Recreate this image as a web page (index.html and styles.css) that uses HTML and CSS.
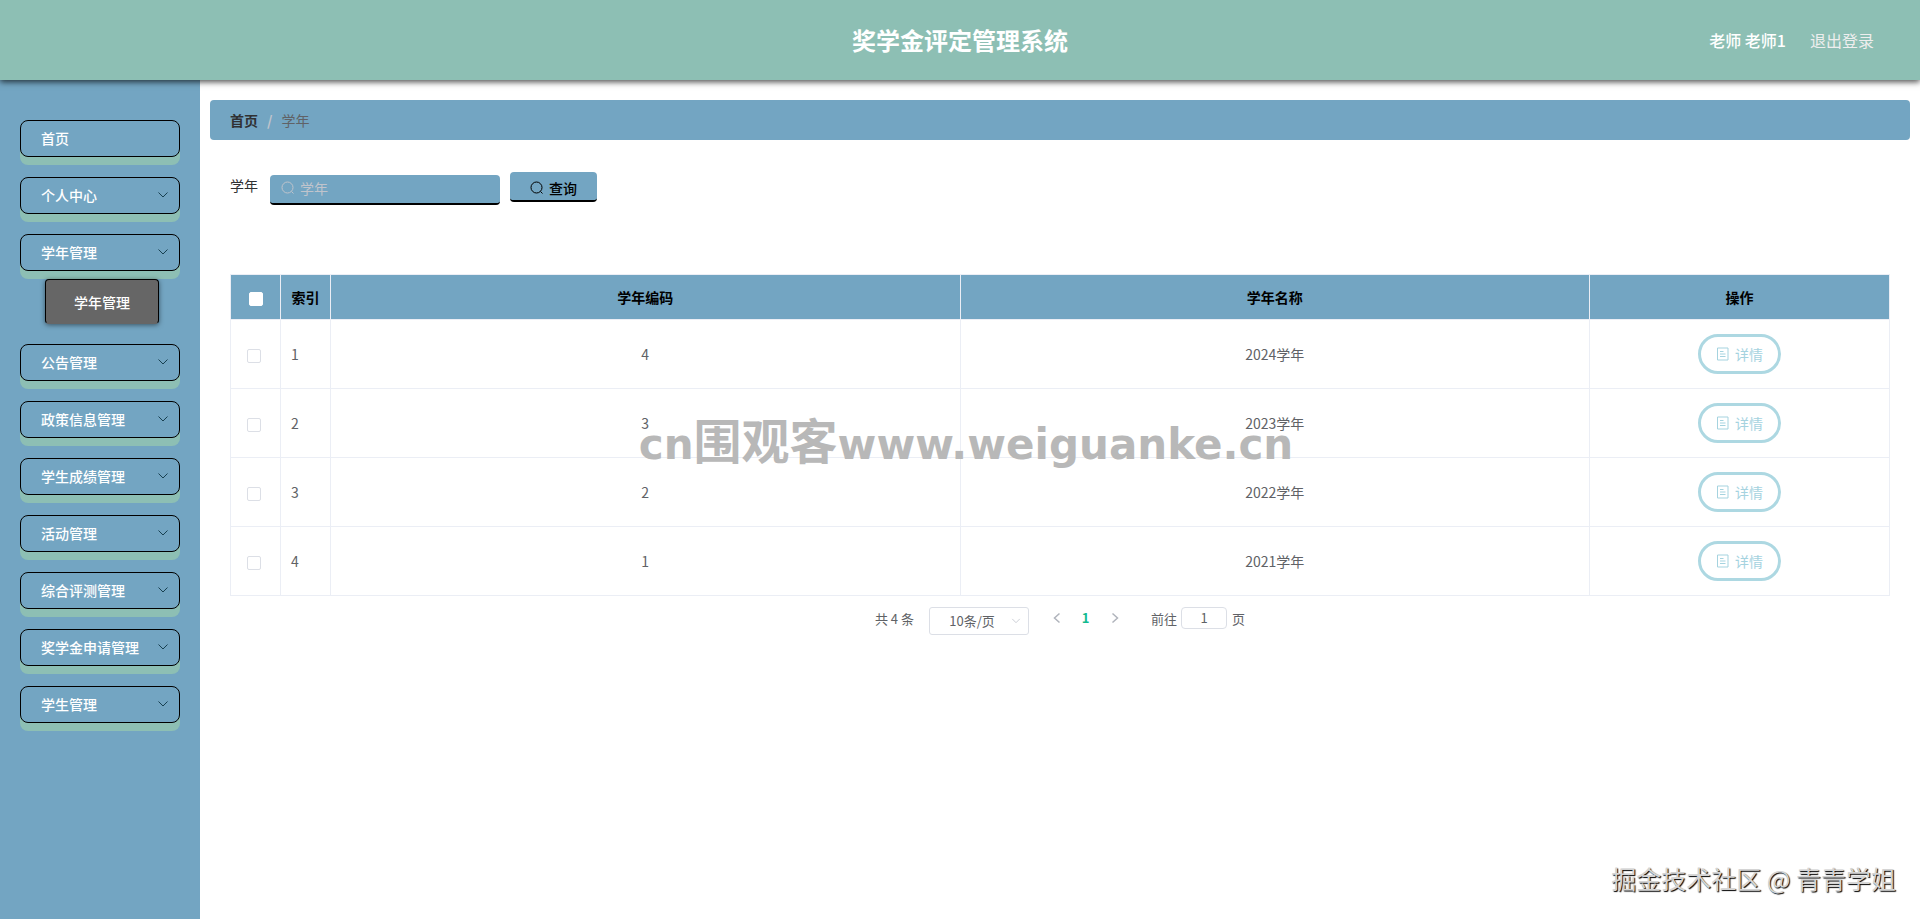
FILE: index.html
```html
<!DOCTYPE html>
<html lang="zh-CN">
<head>
<meta charset="utf-8">
<title>奖学金评定管理系统</title>
<link rel="stylesheet" href="styles.css">
</head>
<body>
<svg class="defs" aria-hidden="true">
  <symbol id="down" viewBox="0 0 12 12"><path d="M1.5 3.5 6 8l4.500-4.500"/></symbol>
  <symbol id="search" viewBox="0 0 14 14"><circle cx="6.500" cy="6.500" r="5.500"/><path d="m10.500 10.500 2 2"/></symbol>
  <symbol id="doc" viewBox="0 0 14 14"><path d="M1.500 1h10.500v12H1.500zM4 4.500h3.500M4 7h5.500M4 9.500h5.500"/></symbol>
  <symbol id="prev" viewBox="0 0 12 12"><path d="M8.500 1.500 3.500 6l5 4.500"/></symbol>
  <symbol id="next" viewBox="0 0 12 12"><path d="m3.500 1.500 5 4.500-5 4.500"/></symbol>
</svg>
<header class="header">
  <h1 class="title">奖学金评定管理系统</h1>
  <div class="account"><span class="user">老师 老师1</span><a class="logout" href="#">退出登录</a></div>
</header>
<div class="layout">
  <nav class="sidebar">
    <a class="menu-item" href="#">首页</a>
    <button class="menu-item">个人中心<svg class="icon caret"><use href="#down"/></svg></button>
    <div class="menu-group">
      <button class="menu-item">学年管理<svg class="icon caret"><use href="#down"/></svg></button>
      <a class="submenu-item" href="#">学年管理</a>
    </div>
    <button class="menu-item">公告管理<svg class="icon caret"><use href="#down"/></svg></button>
    <button class="menu-item">政策信息管理<svg class="icon caret"><use href="#down"/></svg></button>
    <button class="menu-item">学生成绩管理<svg class="icon caret"><use href="#down"/></svg></button>
    <button class="menu-item">活动管理<svg class="icon caret"><use href="#down"/></svg></button>
    <button class="menu-item">综合评测管理<svg class="icon caret"><use href="#down"/></svg></button>
    <button class="menu-item">奖学金申请管理<svg class="icon caret"><use href="#down"/></svg></button>
    <button class="menu-item">学生管理<svg class="icon caret"><use href="#down"/></svg></button>
  </nav>
  <main class="main">
    <nav class="breadcrumb"><a class="crumb-home" href="#">首页</a><span class="slash">/</span><span>学年</span></nav>
    <form class="filters">
      <label class="filter-label" for="year">学年</label>
      <div class="search-box"><svg class="icon glass"><use href="#search"/></svg><input class="search-input" id="year" type="text" placeholder="学年"></div>
      <button class="query" type="button"><svg class="icon glass"><use href="#search"/></svg>查询</button>
    </form>
    <table class="table">
      <colgroup><col class="col-small"><col class="col-small"><col><col><col class="col-action"></colgroup>
      <thead>
        <tr><th><input class="check check-all" type="checkbox" aria-label="全选"></th><th>索引</th><th>学年编码</th><th>学年名称</th><th>操作</th></tr>
      </thead>
      <tbody>
        <tr><td><input class="check" type="checkbox" aria-label="选择第1行"></td><td class="index">1</td><td>4</td><td>2024学年</td><td><button class="detail"><svg class="icon doc"><use href="#doc"/></svg>详情</button></td></tr>
        <tr><td><input class="check" type="checkbox" aria-label="选择第2行"></td><td class="index">2</td><td>3</td><td>2023学年</td><td><button class="detail"><svg class="icon doc"><use href="#doc"/></svg>详情</button></td></tr>
        <tr><td><input class="check" type="checkbox" aria-label="选择第3行"></td><td class="index">3</td><td>2</td><td>2022学年</td><td><button class="detail"><svg class="icon doc"><use href="#doc"/></svg>详情</button></td></tr>
        <tr><td><input class="check" type="checkbox" aria-label="选择第4行"></td><td class="index">4</td><td>1</td><td>2021学年</td><td><button class="detail"><svg class="icon doc"><use href="#doc"/></svg>详情</button></td></tr>
      </tbody>
    </table>
    <div class="pagination">
      <span class="total">共 4 条</span>
      <div class="size-box"><select class="size" aria-label="每页条数"><option>10条/页</option></select><svg class="icon size-caret"><use href="#down"/></svg></div>
      <button class="page-button" aria-label="上一页"><svg class="icon arrow"><use href="#prev"/></svg></button>
      <button class="page-button current">1</button>
      <button class="page-button" aria-label="下一页"><svg class="icon arrow"><use href="#next"/></svg></button>
      <label class="jump">前往<input class="jump-input" type="text" value="1">页</label>
    </div>
  </main>
</div>
<div class="watermark">cn<span class="watermark-cjk">围观客</span>www.weiguanke.cn</div>
<div class="credit">掘金技术社区 @ 青青学姐</div>
</body>
</html>
```
FILE: styles.css
```css
* { box-sizing: border-box; }
body {
  margin: 0;
  min-height: 100vh;
  display: flex;
  flex-direction: column;
  position: relative;
  background: #fff;
  color: #606266;
  font-family: "Noto Sans CJK SC", sans-serif;
  font-size: 14px;
  line-height: 20px;
}
button, input, select { font: inherit; color: inherit; margin: 0; }
button { cursor: pointer; }
a { color: inherit; text-decoration: none; }
.defs { display: none; }
.icon { fill: none; stroke: currentColor; stroke-width: 1; flex: none; }

.header {
  height: 80px;
  padding: 0 46px;
  display: grid;
  grid-template-columns: 1fr auto 1fr;
  align-items: center;
  position: relative;
  background: #8dbfb4;
  color: #fff;
  box-shadow: 0 2px 6px rgba(0, 0, 0, 0.7);
}
.title { grid-column: 2; margin: 0; font-size: 24px; line-height: 36px; font-weight: 700; }
.account { display: flex; justify-content: flex-end; gap: 24px; font-size: 16px; line-height: 24px; }
.user { font-weight: 500; }
.logout { color: #eee; }

.layout { flex: 1; display: flex; }
.sidebar {
  width: 200px;
  flex: none;
  padding: 40px 20px;
  display: flex;
  flex-direction: column;
  gap: 20px;
  background: #73a5c2;
}
.menu-item {
  width: 100%;
  height: 37px;
  padding: 0 10px 2px 20px;
  display: flex;
  align-items: center;
  justify-content: space-between;
  border: 1px solid #000;
  border-radius: 8px;
  background: #73a5c2;
  box-shadow: 0 8px 0 #8dbfb4;
  color: #fff;
  font-weight: 500;
  text-align: left;
}
.caret { width: 12px; height: 12px; color: #184050; }
.submenu-item {
  width: 114px;
  height: 45px;
  margin: 8px 0 0 25px;
  display: flex;
  align-items: center;
  justify-content: center;
  position: relative;
  border: 1px solid #000;
  border-bottom-color: #666;
  border-radius: 4px;
  background: #666;
  box-shadow: 0 1px 5px rgba(0, 0, 0, 0.5);
  color: #fff;
  font-weight: 500;
}

.main { flex: 1; min-width: 0; padding: 20px 10px; }
.breadcrumb {
  height: 40px;
  padding: 0 20px;
  display: flex;
  align-items: center;
  gap: 9px;
  border-radius: 4px;
  background: #73a5c2;
}
.crumb-home { color: #303133; font-weight: 700; }
.slash { color: #c0c4cc; font-weight: 700; }
.filters {
  padding: 32px 20px 0;
  display: flex;
  align-items: flex-start;
  color: #303133;
}
.filter-label { width: 40px; padding-top: 3px; }
.search-box {
  width: 230px;
  height: 30px;
  margin: 3px 10px 0 0;
  padding: 0 0 2px 11px;
  display: flex;
  align-items: center;
  gap: 5px;
  border-bottom: 2px solid #000;
  border-radius: 4px;
  background: #73a5c2;
  color: #c0c4cc;
}
.glass { width: 14px; height: 14px; }
.search-input {
  flex: 1;
  min-width: 0;
  height: 26px;
  padding: 0;
  border: 0;
  outline: 0;
  background: transparent;
}
.search-input::placeholder { color: #c0c4cc; opacity: 1; }
.query {
  width: 87px;
  height: 30px;
  padding: 4px 0 0;
  display: flex;
  align-items: center;
  justify-content: center;
  gap: 5px;
  border: 0;
  border-bottom: 2px solid #000;
  border-radius: 4px;
  background: #73a5c2;
  color: #000;
  font-weight: 500;
}

.table {
  width: calc(100% - 40px);
  margin: 69px 20px 0;
  table-layout: fixed;
  border-collapse: collapse;
}
.col-small { width: 50px; }
.col-action { width: 300px; }
.table th, .table td { padding: 0; border: 1px solid #ebeef5; text-align: center; }
.table th { height: 45px; background: #73a5c2; color: #000; font-weight: 700; }
.table td { height: 69px; }
.table .index { padding-left: 10px; text-align: left; }
.check {
  appearance: none;
  width: 14px;
  height: 14px;
  margin-right: 3px;
  border: 1px solid #dcdfe6;
  border-radius: 2px;
  background: #fff;
  vertical-align: middle;
}
.check-all { margin-right: 0; border-color: #fff; }
.detail {
  width: 83px;
  height: 40px;
  padding: 0;
  display: inline-flex;
  align-items: center;
  justify-content: center;
  gap: 5px;
  border: 3px solid #add8e2;
  border-radius: 20px;
  background: #fff;
  color: #a5d3df;
  vertical-align: middle;
}
.doc { width: 14px; height: 14px; }

.pagination {
  padding-top: 11px;
  display: flex;
  align-items: flex-start;
  justify-content: center;
  font-size: 13px;
  line-height: 24px;
}
.total { margin-right: 15px; }
.size-box { width: 100px; margin-right: 13px; display: grid; align-items: center; }
.size {
  grid-area: 1 / 1;
  appearance: none;
  width: 100%;
  height: 28px;
  padding: 0 24px 0 10px;
  border: 1px solid #dcdfe6;
  border-radius: 3px;
  background: #fff;
  text-align: center;
}
.size-caret { grid-area: 1 / 1; justify-self: end; width: 10px; height: 10px; margin-right: 8px; color: #c0c4cc; pointer-events: none; }
.page-button {
  width: 29px;
  height: 22px;
  padding: 0;
  display: flex;
  align-items: center;
  justify-content: center;
  border: 0;
  background: transparent;
  color: #b0b4bc;
}
.arrow { width: 12px; height: 12px; stroke-width: 1.5; }
.current { color: #11ba8f; font-weight: 700; }
.jump { margin-left: 22px; display: flex; }
.jump-input {
  width: 46px;
  height: 22px;
  margin: 0 5px 0 4px;
  padding: 0;
  border: 1px solid #dcdfe6;
  border-radius: 4px;
  text-align: center;
}

.watermark {
  position: absolute;
  top: 403px;
  left: 0;
  right: 0;
  padding-left: 12px;
  text-align: center;
  color: #b8b8b8;
  font-family: "DejaVu Sans", sans-serif;
  font-size: 42px;
  font-weight: 700;
  line-height: 70px;
  pointer-events: none;
}
.watermark-cjk { font-family: "Noto Sans CJK SC", sans-serif; font-size: 48px; }
.credit {
  position: absolute;
  right: 24px;
  bottom: 23px;
  color: #d4d4d4;
  font-size: 25px;
  line-height: 36px;
  text-shadow: 1px 1px 1px #000;
  pointer-events: none;
}
```
